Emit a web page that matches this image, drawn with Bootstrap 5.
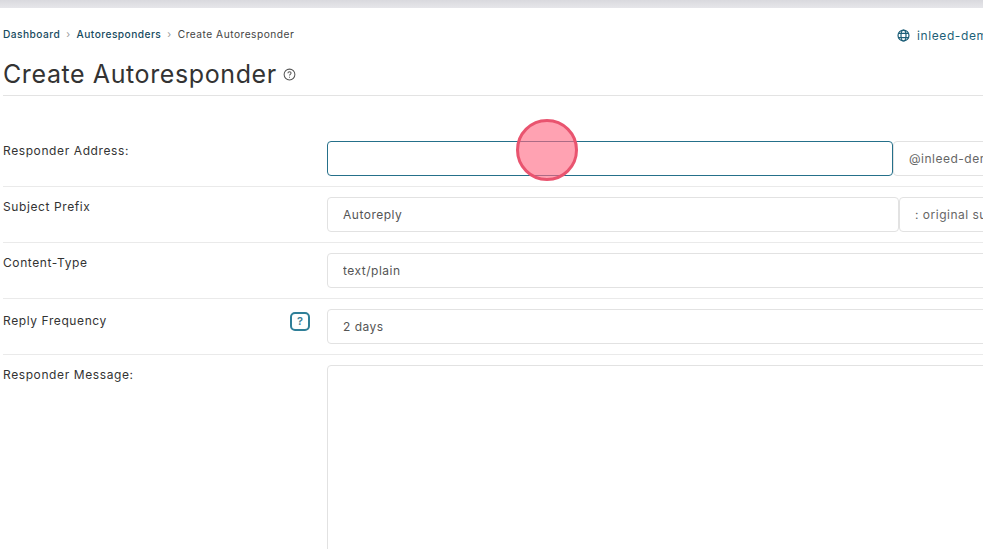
<!doctype html>
<html lang="en">
<head>
<meta charset="utf-8">
<title>Create Autoresponder</title>
<link rel="stylesheet" href="https://cdn.jsdelivr.net/npm/bootstrap@5.3.0/dist/css/bootstrap.min.css">
<style>
html, body { height: 549px; overflow: hidden; background: #fff; }
body { font-family: Inter, "Open Sans", sans-serif; color: #333; font-size: 12px; }
.topstrip { height: 8px; background: linear-gradient(#d9d9de, #e6e6ea); }
.sheet { width: 1180px; padding: 0 0 0 3px; }
.crumbbar { height: 52px; padding-top: 19px; }
.crumbbar .breadcrumb { font-size: 10.2px; letter-spacing: .5px; margin: 0; --bs-breadcrumb-divider: '›'; --bs-breadcrumb-item-padding-x: 6px; --bs-breadcrumb-divider-color: #999; }
.crumbbar a { color: #174b60; text-decoration: none; font-weight: 500; letter-spacing: .45px; }
.crumbbar .breadcrumb-item.active { color: #444; }
.domainlink { color: #1d5f78; font-size: 12px; letter-spacing: .6px; position: absolute; left: 897px; top: 27px; white-space: nowrap; text-decoration: none; }
.domainicon { vertical-align: -2px; margin-right: 7px; }
.headline { font-size: 25px; font-weight: 400; color: #333; margin: 0; letter-spacing: .6px; line-height: 28px; }
.headbar { height: 36px; border-bottom: 1px solid #e3e3e3; padding-bottom: 7px; gap: 6px; }
.formrow { display: flex; padding: 10px 0; border-bottom: 1px solid #eaeaea; }
.formrow.first { padding-top: 45px; }
.formrow.last { border-bottom: 0; }
.fieldlabel { flex: 0 0 324px; margin: 0; padding-top: 1px; font-size: 12px; letter-spacing: .6px; color: #333; position: relative; }
.fieldlabel.withhint { padding-top: 3px; }
.fieldlabel.msglabel { padding-top: 1px; }
.fieldbox { flex: 1; min-width: 0; }
.fieldbox .form-control, .fieldbox .form-select, .fieldbox .input-group-text {
  height: 35px; font-size: 12px; color: #555; border-color: #e2e2e2; border-radius: 4px !important; padding-left: 15px; letter-spacing: .5px; background-color: #fff;
}
.fieldbox .input-group { flex-wrap: nowrap; }
.fieldbox .input-group-text { margin-left: 0 !important; justify-content: flex-start; color: #666; }
.addr { width: 287px; flex: none; }
.subj { width: 281px; flex: none; }
.fieldbox .activefield.form-control { border-color: #25708a; }
.fieldbox .msgbox { height: 260px; }
.hintbtn { position: absolute; left: 287px; top: 3px; width: 20px; height: 19px; border: 2px solid #2f7f98; border-radius: 5px; color: #3d7f96; font-size: 11px; font-weight: 600; display: flex; align-items: center; justify-content: center; line-height: 1; background: #fff; padding: 0; }
.clickspot { position: absolute; left: 516px; top: 119px; width: 62px; height: 62px; border-radius: 50%; background: rgba(255, 105, 130, .62); border: 3px solid #e9546f; pointer-events: none; }
</style>
</head>
<body>
<div class="topstrip"></div>
<div class="sheet">
  <div class="crumbbar">
    <nav aria-label="breadcrumb">
      <ol class="breadcrumb">
        <li class="breadcrumb-item"><a href="#">Dashboard</a></li>
        <li class="breadcrumb-item"><a href="#">Autoresponders</a></li>
        <li class="breadcrumb-item active" aria-current="page">Create Autoresponder</li>
      </ol>
    </nav>
  </div>
  <a class="domainlink" href="#">
    <svg class="domainicon" width="13" height="13" viewBox="0 0 14 14" fill="none" stroke="#1d5f78" stroke-width="1.3"><circle cx="7" cy="7" r="5.9"/><ellipse cx="7" cy="7" rx="2.7" ry="5.9"/><path d="M1.6 4.8h10.8M1.6 9.2h10.8"/></svg>inleed-demo.se
  </a>
  <div class="headbar d-flex align-items-center">
    <h1 class="headline">Create Autoresponder</h1>
    <svg width="13" height="13" viewBox="0 0 14 14" fill="none" stroke="#555" stroke-width="1.1"><circle cx="7" cy="7" r="5.8"/><path d="M5.3 5.6c0-1 .8-1.6 1.7-1.6s1.7.6 1.7 1.5c0 1.3-1.7 1.3-1.7 2.6"/><path d="M7 9.4v1"/></svg>
  </div>

  <div class="formrow first">
    <label class="fieldlabel">Responder Address:</label>
    <div class="fieldbox">
      <div class="input-group">
        <input type="text" class="form-control activefield">
        <span class="input-group-text addr">@inleed-demo.se</span>
      </div>
    </div>
  </div>
  <div class="formrow">
    <label class="fieldlabel">Subject Prefix</label>
    <div class="fieldbox">
      <div class="input-group">
        <input type="text" class="form-control" value="Autoreply">
        <span class="input-group-text subj">: original subject</span>
      </div>
    </div>
  </div>
  <div class="formrow">
    <label class="fieldlabel">Content-Type</label>
    <div class="fieldbox">
      <select class="form-select"><option>text/plain</option></select>
    </div>
  </div>
  <div class="formrow">
    <label class="fieldlabel withhint">Reply Frequency
      <button type="button" class="hintbtn">?</button>
    </label>
    <div class="fieldbox">
      <select class="form-select"><option>2 days</option></select>
    </div>
  </div>
  <div class="formrow last">
    <label class="fieldlabel msglabel">Responder Message:</label>
    <div class="fieldbox">
      <textarea class="form-control msgbox"></textarea>
    </div>
  </div>
</div>
<div class="clickspot"></div>
<script src="https://cdn.jsdelivr.net/npm/bootstrap@5.3.0/dist/js/bootstrap.bundle.min.js"></script>
</body>
</html>
